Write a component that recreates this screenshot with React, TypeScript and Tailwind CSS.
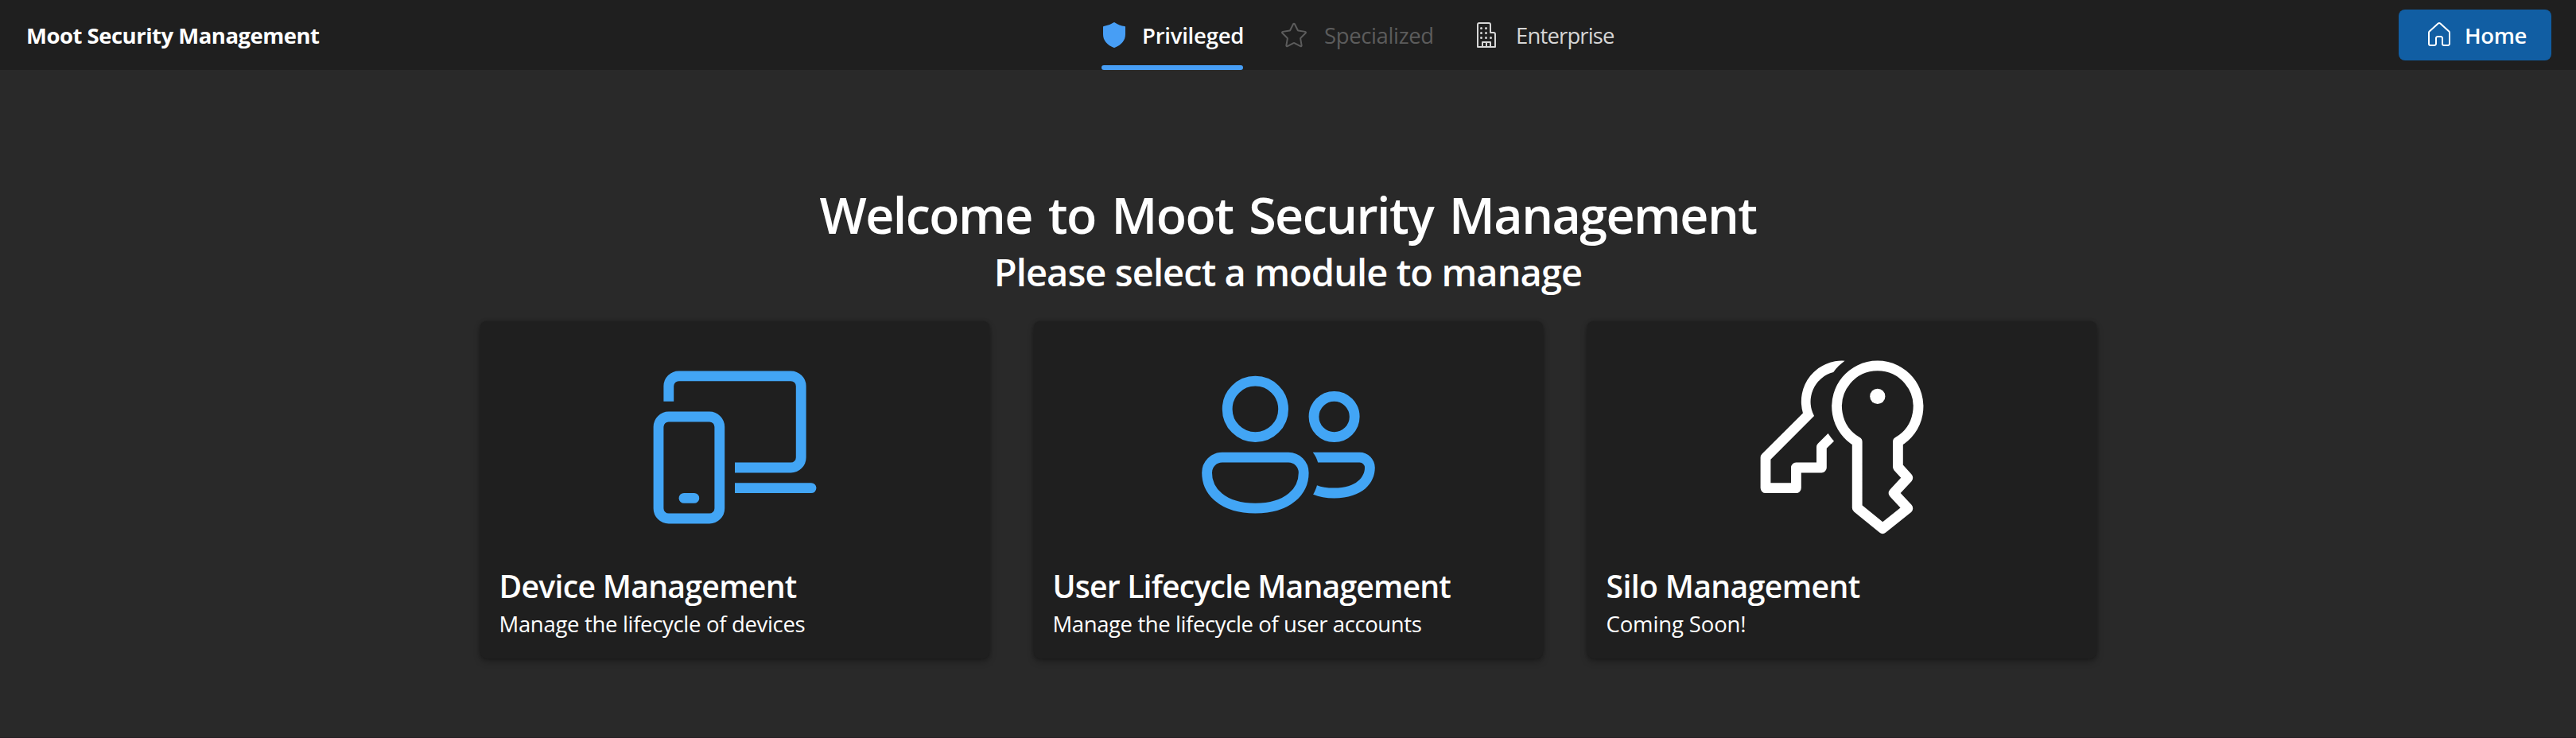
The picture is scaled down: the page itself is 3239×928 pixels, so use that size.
import React from "react";

type IconProps = { className?: string };

function ShieldIcon({ className }: IconProps) {
  return (
    <svg viewBox="0 0 20 20" fill="currentColor" className={className}>
      <path d="M9.72 2.08a.5.5 0 0 1 .56 0c1.94 1.3 4.03 2.1 6.29 2.43A.5.5 0 0 1 17 5v4.5c0 3.89-2.31 6.73-6.82 8.47a.5.5 0 0 1-.36 0C5.31 16.23 3 13.39 3 9.5V5a.5.5 0 0 1 .43-.5 15.05 15.05 0 0 0 6.29-2.42Z" />
    </svg>
  );
}

function StarIcon({ className }: IconProps) {
  return (
    <svg viewBox="0 0 20 20" fill="currentColor" className={className}>
      <path d="M9.1 2.9a1 1 0 0 1 1.8 0l1.93 3.91 4.31.63a1 1 0 0 1 .56 1.7l-3.12 3.05.73 4.3a1 1 0 0 1-1.45 1.05L10 15.51l-3.86 2.03a1 1 0 0 1-1.45-1.05l.74-4.3L2.3 9.14a1 1 0 0 1 .56-1.7l4.31-.63L9.1 2.9Zm.9.44L8.07 7.25a1 1 0 0 1-.75.55L3 8.43l3.12 3.04a1 1 0 0 1 .3.89l-.75 4.3 3.87-2.03a1 1 0 0 1 .93 0l3.86 2.03-.74-4.3a1 1 0 0 1 .29-.89L17 8.43l-4.32-.63a1 1 0 0 1-.75-.55L10 3.35Z" />
    </svg>
  );
}

function BuildingIcon({ className }: IconProps) {
  return (
    <svg viewBox="0 0 20 20" fill="none" stroke="currentColor" strokeLinejoin="round" className={className}>
      <path d="M4.5 17.5v-14a1 1 0 0 1 1-1h6a1 1 0 0 1 1 1v5h2a1 1 0 0 1 1 1v8Z" />
      <path d="M7.5 17.5v-3h5v3M10 14.5v3" />
      <g fill="currentColor" stroke="none">
        <circle cx="6.75" cy="5.75" r=".75" />
        <circle cx="9.75" cy="5.75" r=".75" />
        <circle cx="6.75" cy="8.75" r=".75" />
        <circle cx="9.75" cy="8.75" r=".75" />
        <circle cx="6.75" cy="11.75" r=".75" />
        <circle cx="9.75" cy="11.75" r=".75" />
        <circle cx="12.75" cy="11.75" r=".75" />
      </g>
    </svg>
  );
}

function HomeIcon({ className }: IconProps) {
  return (
    <svg viewBox="0 0 20 20" fill="currentColor" className={className}>
      <path d="M9 2.39a1.5 1.5 0 0 1 2 0l5.5 4.94c.32.28.5.69.5 1.12v7.05c0 .83-.67 1.5-1.5 1.5H13a1.5 1.5 0 0 1-1.5-1.5V12a.5.5 0 0 0-.5-.5H9a.5.5 0 0 0-.5.5v3.5c0 .83-.67 1.5-1.5 1.5H4.5A1.5 1.5 0 0 1 3 15.5V8.45c0-.43.18-.84.5-1.12L9 2.39Zm1.33.74a.5.5 0 0 0-.66 0l-5.5 4.94A.5.5 0 0 0 4 8.45v7.05c0 .28.22.5.5.5H7a.5.5 0 0 0 .5-.5V12c0-.83.67-1.5 1.5-1.5h2c.83 0 1.5.67 1.5 1.5v3.5c0 .28.22.5.5.5h2.5a.5.5 0 0 0 .5-.5V8.45a.5.5 0 0 0-.17-.38l-5.5-4.94Z" />
    </svg>
  );
}

function PhoneLaptopIcon({ className }: IconProps) {
  return (
    <svg viewBox="0 0 20 20" fill="none" stroke="currentColor" className={className}>
      <path d="M3.5 6V4.5a1 1 0 0 1 1-1h11a1 1 0 0 1 1 1v7a1 1 0 0 1-1 1H10" />
      <rect x="2.5" y="7.5" width="6" height="10" rx="1" />
      <path fill="currentColor" stroke="none" d="M10 14h7.5a.5.5 0 0 1 0 1H10Z" />
      <rect fill="currentColor" stroke="none" x="4.5" y="15" width="2" height="1" rx=".5" />
    </svg>
  );
}

function PeopleIcon({ className }: IconProps) {
  return (
    <svg viewBox="0 0 20 20" fill="none" stroke="currentColor" className={className}>
      <circle cx="6.75" cy="6.75" r="2.75" />
      <circle cx="14.5" cy="7.5" r="2" />
      <path d="M3.5 11.5H10a1.5 1.5 0 0 1 1.5 1.5c0 1.75-1.45 3.5-4.75 3.5S2 14.75 2 13a1.5 1.5 0 0 1 1.5-1.5Z" />
      <path
        fill="currentColor"
        stroke="none"
        d="M12.4 11H17a1.5 1.5 0 0 1 1.5 1.5c0 1.5-1.2 3-4 3-.82 0-1.5-.13-2.07-.37.17-.3.3-.6.38-.9.4.17.96.27 1.69.27 2.2 0 3-1.1 3-2a.5.5 0 0 0-.5-.5h-4.1c-.1-.37-.27-.7-.5-1Z"
      />
    </svg>
  );
}

function KeysIcon({ className }: IconProps) {
  return (
    <svg viewBox="0 0 20 20" fill="none" stroke="currentColor" strokeLinejoin="round" className={className}>
      <path d="M11.5 9.96a4 4 0 1 1 4 0v2.47l.97 1.07L15.08 15l1.39 1.5L14 18.48l-2.5-2.03Z" />
      <circle fill="currentColor" stroke="none" cx="13.5" cy="5.5" r=".75" />
      <path
        fill="currentColor"
        stroke="none"
        d="M10.28 2.01A4 4 0 0 0 6.17 7.14l-4.02 4.01a.5.5 0 0 0-.15.35v3a.5.5 0 0 0 .5.5h3a.5.5 0 0 0 .5-.5V13h2a.5.5 0 0 0 .5-.5v-1.9l.72-.7a5.6 5.6 0 0 1-.58-.76l-1 1a.5.5 0 0 0-.14.35V12h-2a.5.5 0 0 0-.5.5V14H3v-2.3l4.27-4.27a3 3 0 0 1 1.89-4.31c.3-.42.68-.8 1.12-1.11Z"
      />
    </svg>
  );
}

function Header() {
  return (
    <header className="flex h-[88px] items-center justify-between bg-[#1f1f1f] pr-[31px] pl-[33px] text-[27.5px] leading-10">
      <div className="w-[368px] pt-0.5 font-bold tracking-[-0.5px] whitespace-nowrap">Moot Security Management</div>
      <nav className="flex h-full w-[647px] whitespace-nowrap">
        <div className="relative flex w-[178px] items-center">
          <ShieldIcon className="-ml-1 size-10 shrink-0 text-[#479ef5]" />
          <span className="ml-[15px] pt-0.5 font-semibold tracking-[-0.24px]">Privileged</span>
          <span className="absolute inset-x-0 bottom-0 h-1.5 rounded-[3px] bg-[#479ef5]" />
        </div>
        <div className="ml-11 flex w-[196px] items-center text-[#5c5c5c]">
          <StarIcon className="size-10 shrink-0" />
          <span className="ml-[18px] pt-0.5 tracking-[-0.37px]">Specialized</span>
        </div>
        <div className="ml-[46px] flex items-center text-[#d6d6d6]">
          <BuildingIcon className="size-10 shrink-0" />
          <span className="ml-[17px] pt-0.5 tracking-[-0.85px]">Enterprise</span>
        </div>
      </nav>
      <button className="flex h-16 w-48 items-center rounded-lg bg-[#115ea3] pl-[31px] font-semibold">
        <HomeIcon className="size-10 shrink-0" />
        <span className="ml-3 pt-0.5 tracking-[-0.4px]">Home</span>
      </button>
    </header>
  );
}

type CardProps = {
  icon: React.ReactNode;
  title: string;
  titleClass: string;
  text: string;
  textClass: string;
};

function ModuleCard({ icon, title, titleClass, text, textClass }: CardProps) {
  return (
    <div className="flex h-[424px] w-[640px] flex-col rounded-lg bg-[#1f1f1f] p-6 shadow-[0_0_4px_rgba(0,0,0,0.24),0_4px_8px_rgba(0,0,0,0.28)]">
      <div className="flex justify-center">{icon}</div>
      <h3 className={`mt-[25px] text-[39.2px] leading-[56px] font-semibold whitespace-nowrap ${titleClass}`}>
        {title}
      </h3>
      <p className={`text-[27.5px] leading-10 whitespace-nowrap ${textClass}`}>{text}</p>
    </div>
  );
}

export default function App() {
  return (
    <div className="flex h-[928px] flex-col border-b border-[#251f24] bg-[#292929] font-['Open_Sans','Noto_Sans',sans-serif] text-white">
      <Header />
      <main className="flex flex-col items-center pt-[142px]">
        <h1 className="text-[62.7px] leading-[80px] font-semibold tracking-[-1.53px] [word-spacing:5px]">
          Welcome to Moot Security Management
        </h1>
        <h2 className="text-[47px] leading-[64px] font-semibold tracking-[-0.93px]">
          Please select a module to manage
        </h2>
        <div className="mt-[30px] flex gap-14">
          <ModuleCard
            icon={<PhoneLaptopIcon className="size-64 text-[#42a5f5]" />}
            title="Device Management"
            titleClass="tracking-[-0.73px]"
            text="Manage the lifecycle of devices"
            textClass="tracking-[-0.32px]"
          />
          <ModuleCard
            icon={<PeopleIcon className="size-64 text-[#42a5f5]" />}
            title="User Lifecycle Management"
            titleClass="tracking-[-0.84px]"
            text="Manage the lifecycle of user accounts"
            textClass="tracking-[-0.4px]"
          />
          <ModuleCard
            icon={<KeysIcon className="size-64" />}
            title="Silo Management"
            titleClass="tracking-[-0.64px]"
            text="Coming Soon!"
            textClass="tracking-[-0.13px]"
          />
        </div>
      </main>
    </div>
  );
}
